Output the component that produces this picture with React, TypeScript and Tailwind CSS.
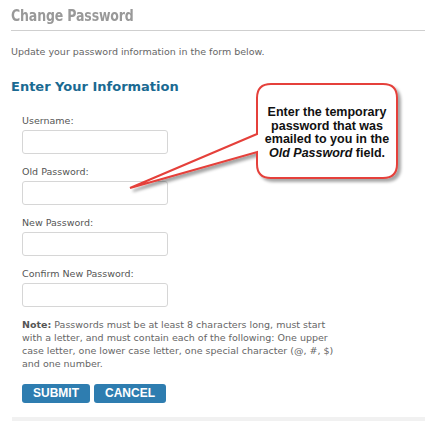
import React from 'react';

const Field: React.FC<{ label: string }> = ({ label }) => (
  <div className="mb-[11px]">
    <div className="text-[9.5px] text-[#555] leading-[13px] mb-[3px]">{label}</div>
    <div className="w-[146px] h-[24px] border border-[#d6d6d6] rounded-[3px] bg-white" />
  </div>
);

const Callout: React.FC = () => (
  <div className="absolute left-[120px] top-[78px] w-[300px] h-[120px]">
    <svg width="300" height="120" className="absolute left-0 top-0">
      <defs>
        <filter id="sh" x="-10%" y="-10%" width="130%" height="130%">
          <feDropShadow dx="3" dy="3" stdDeviation="1.5" floodColor="#000" floodOpacity="0.35" />
        </filter>
      </defs>
      <path
        d="M151 6 H263 Q277 6 277 20 V86 Q277 100 263 100 H151 Q137 100 137 86 V74 L10 110 L137 56 V20 Q137 6 151 6 Z"
        fill="#fff"
        stroke="#e5403a"
        strokeWidth="2"
        filter="url(#sh)"
      />
    </svg>
    <div className="absolute left-[137px] top-[28px] w-[140px] text-center font-['Liberation_Sans',sans-serif] font-bold text-[12.5px] leading-[13.7px] text-[#111]">
      Enter the temporary password that was emailed to you in the <i>Old Password</i> field.
    </div>
  </div>
);

export default function App() {
  return (
    <div className="relative w-[425px] h-[421px] bg-white font-['DejaVu_Sans',Verdana,sans-serif] overflow-hidden">
      <div className="pl-[11px] pt-[6px]">
        <h1 className="font-bold text-[#999] leading-[19px] pb-[5px] border-b border-[#cfcfcf]">
          <span className="inline-block text-[16.5px] tracking-[-0.2px] scale-x-[0.76] origin-left">Change Password</span>
        </h1>
        <p className="mt-[14px] text-[9.5px] text-[#666] leading-[13px]">
          Update your password information in the form below.
        </p>
        <h2 className="mt-[20px] text-[13px] font-bold text-[#1a6a92] leading-[18px]">
          Enter Your Information
        </h2>
      </div>
      <div className="pl-[22px] pt-[18px]">
        <Field label="Username:" />
        <Field label="Old Password:" />
        <Field label="New Password:" />
        <Field label="Confirm New Password:" />
        <p className="w-[316px] text-[9.5px] text-[#666] leading-[13px] mt-[1px]">
          <b className="text-[#555]">Note:</b> Passwords must be at least 8 characters long, must start with a letter, and must contain each of the following: One upper case letter, one lower case letter, one special character (@, #, $) and one number.
        </p>
        <div className="flex gap-[4px] mt-[14px]">
          <button className="w-[68px] h-[19px] rounded-[3px] bg-[#2e7db0] text-white font-bold text-[12px] font-['Liberation_Sans',sans-serif] leading-[19px]">
            SUBMIT
          </button>
          <button className="w-[72px] h-[19px] rounded-[3px] bg-[#2e7db0] text-white font-bold text-[12px] font-['Liberation_Sans',sans-serif] leading-[19px]">
            CANCEL
          </button>
        </div>
      </div>
      <div className="absolute left-[12px] right-0 top-[417px] h-[4px] bg-[#f1f1f1]" />
      <Callout />
    </div>
  );
}
